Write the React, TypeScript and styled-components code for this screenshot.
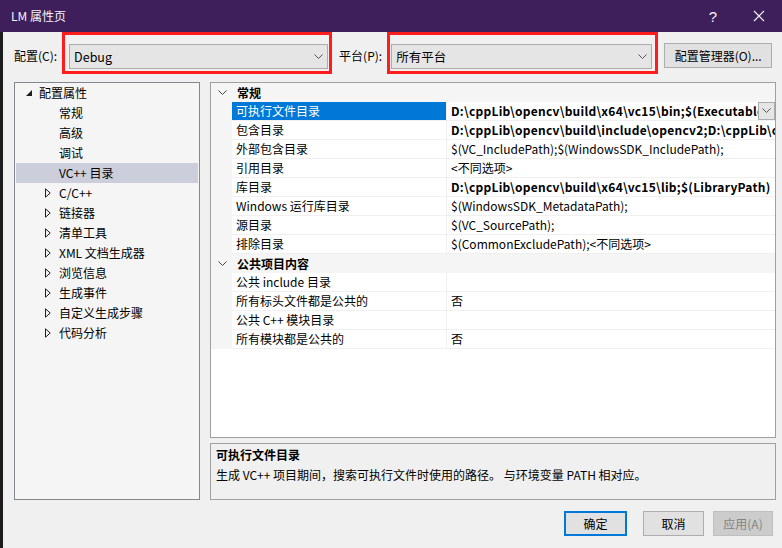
import React from "react";
import styled, { createGlobalStyle, css } from "styled-components";

const Global = createGlobalStyle`
  html, body { margin: 0; padding: 0; background: #f0f0f0; }
  body {
    font-family: "Noto Sans CJK SC", "Noto Sans", "Liberation Sans", sans-serif;
    font-size: 12px;
    color: #000;
  }
  * { box-sizing: border-box; }
`;

const Window = styled.div`
  width: 782px;
  height: 548px;
  display: flex;
  flex-direction: column;
  overflow: hidden;
  background: #f0f0f0;
`;

const TitleBar = styled.div`
  height: 32px;
  flex: none;
  background: #3e1f5b;
  color: #f4f4f4;
  display: flex;
  align-items: center;
  padding-left: 11px;
  font-size: 12px;
`;

const TitleText = styled.div`
  flex: 1;
  line-height: 16px;
`;

const TitleBtn = styled.div<{ $w: number }>`
  width: ${(p) => p.$w}px;
  height: 32px;
  display: flex;
  align-items: center;
  justify-content: center;
  color: #f4f4f4;
  font-size: 15px;
  font-family: "Liberation Sans", sans-serif;
`;

const Body = styled.div`
  flex: 1;
  display: flex;
  flex-direction: column;
  border-left: 3px solid #1c1c1e;
  padding: 0 6px 0 11px;
`;

const TopRow = styled.div`
  height: 50px;
  flex: none;
  display: flex;
  align-items: flex-start;
`;

const Label = styled.div<{ $ml?: number }>`
  margin-top: 16px;
  margin-left: ${(p) => p.$ml ?? 0}px;
  line-height: 16px;
  white-space: nowrap;
`;

const Highlight = styled.div<{ $w: number; $ml: number; $pl: number; $pr: number }>`
  width: ${(p) => p.$w}px;
  flex: none;
  height: 42px;
  margin-left: ${(p) => p.$ml}px;
  border: 3px solid #ff1c1c;
  padding: 9px ${(p) => p.$pr}px 2px ${(p) => p.$pl}px;
  display: flex;
`;

const Combo = styled.div`
  flex: 1;
  height: 25px;
  background: #e5e5e5;
  border: 1px solid #acacac;
  display: flex;
  align-items: center;
  padding-left: 4px;
  padding-right: 4px;
`;

const ComboText = styled.div`
  flex: 1;
  line-height: 16px;
  font-size: 12.5px;
`;

const Button = styled.div<{ $w: number; $variant?: "default" | "primary" | "disabled" }>`
  width: ${(p) => p.$w}px;
  flex: none;
  height: 25px;
  display: flex;
  align-items: center;
  justify-content: center;
  background: #e1e1e1;
  border: 1px solid #adadad;
  line-height: 16px;
  white-space: nowrap;
  ${(p) =>
    p.$variant === "primary" &&
    css`
      border: 2px solid #0078d7;
    `}
  ${(p) =>
    p.$variant === "disabled" &&
    css`
      background: #cccccc;
      border-color: #bfbfbf;
      color: #838383;
    `}
`;

const ManagerButton = styled(Button)`
  margin-left: 6px;
  margin-top: 11px;
`;

const Main = styled.div`
  display: flex;
  gap: 10px;
  height: 418px;
  flex: none;
`;

const Tree = styled.div`
  width: 186px;
  flex: none;
  height: 418px;
  background: #f5f5f5;
  border: 1px solid #828790;
  padding: 0 1px;
`;

const TreeRow = styled.div<{ $selected?: boolean; $level: number }>`
  height: 20px;
  display: flex;
  align-items: center;
  padding-left: ${(p) => (p.$level === 0 ? 9 : 29)}px;
  background: ${(p) => (p.$selected ? "#cccedb" : "transparent")};
  white-space: nowrap;
  line-height: 16px;
`;

const Expander = styled.div`
  width: 14px;
  height: 20px;
  display: flex;
  align-items: center;
  justify-content: flex-start;
  flex: none;
`;

const RightCol = styled.div`
  width: 566px;
  flex: none;
  display: flex;
  flex-direction: column;
  gap: 5px;
`;

const Grid = styled.div`
  height: 357px;
  background: #ffffff;
  border: 1px solid #a0a0a0;
  overflow: hidden;
`;

const CategoryRow = styled.div`
  height: 19px;
  display: flex;
  align-items: center;
  background: #f5f5f5;
  font-weight: bold;
  line-height: 16px;
`;

const CatChevron = styled.div`
  width: 21px;
  display: flex;
  justify-content: center;
  padding-left: 2px;
`;

const CatText = styled.div`
  padding-left: 5px;
`;

const PropRow = styled.div`
  height: 19px;
  display: flex;
`;

const Gutter = styled.div`
  width: 21px;
  flex: none;
  background: #f5f5f5;
`;

const NameCell = styled.div<{ $selected?: boolean }>`
  width: 215px;
  flex: none;
  padding-left: 4px;
  display: flex;
  align-items: center;
  line-height: 16px;
  border-bottom: 1px solid #f0f0f0;
  border-right: 1px solid #f0f0f0;
  white-space: nowrap;
  ${(p) =>
    p.$selected &&
    css`
      background: #0078d7;
      color: #ffffff;
    `}
`;

const ValueCell = styled.div`
  flex: 1;
  min-width: 0;
  display: flex;
  align-items: stretch;
  border-bottom: 1px solid #f0f0f0;
`;

const ValueText = styled.div<{ $bold?: boolean }>`
  flex: 1;
  min-width: 0;
  overflow: hidden;
  white-space: nowrap;
  padding-left: 4px;
  line-height: 18px;
  font-weight: ${(p) => (p.$bold ? "bold" : "normal")};
  letter-spacing: ${(p) => (p.$bold ? "0.26px" : "0")};
`;

const DropBtn = styled.div`
  width: 17px;
  flex: none;
  background: #e5e5e5;
  border: 1px solid #acacac;
  display: flex;
  align-items: center;
  justify-content: center;
`;

const Description = styled.div`
  height: 57px;
  border: 1px solid #a0a0a0;
  background: #f0f0f0;
  padding: 1px 5px;
  line-height: 20px;
`;

const DescTitle = styled.div`
  font-weight: bold;
`;

const Footer = styled.div`
  flex: 1;
  display: flex;
  justify-content: flex-end;
  align-items: flex-start;
  padding-top: 11px;
  padding-right: 3px;
`;

const FooterGap = styled.div<{ $w: number }>`
  width: ${(p) => p.$w}px;
`;

const ChevronDown = ({ size = 9, color = "#555" }: { size?: number; color?: string }) => (
  <svg width={size} height={size * 0.6} viewBox="0 0 10 6">
    <path d="M0.5 0.5 L5 5 L9.5 0.5" fill="none" stroke={color} strokeWidth="1.1" />
  </svg>
);

const ExpandedTri = () => (
  <svg width="8" height="8" viewBox="0 0 8 8">
    <path d="M7 1 L7 7 L1 7 Z" fill="#1e1e1e" />
  </svg>
);

const CollapsedTri = () => (
  <svg width="6" height="10" viewBox="0 0 6 10">
    <path d="M0.5 0.8 L5.2 5 L0.5 9.2 Z" fill="none" stroke="#1e1e1e" strokeWidth="1" />
  </svg>
);

const CloseIcon = () => (
  <svg width="12" height="12" viewBox="0 0 12 12">
    <path d="M1 1 L11 11 M11 1 L1 11" stroke="#f4f4f4" strokeWidth="1.2" />
  </svg>
);

type TreeItem = { label: string; level: number; exp?: "open" | "closed"; selected?: boolean };

const treeItems: TreeItem[] = [
  { label: "配置属性", level: 0, exp: "open" },
  { label: "常规", level: 1 },
  { label: "高级", level: 1 },
  { label: "调试", level: 1 },
  { label: "VC++ 目录", level: 1, selected: true },
  { label: "C/C++", level: 1, exp: "closed" },
  { label: "链接器", level: 1, exp: "closed" },
  { label: "清单工具", level: 1, exp: "closed" },
  { label: "XML 文档生成器", level: 1, exp: "closed" },
  { label: "浏览信息", level: 1, exp: "closed" },
  { label: "生成事件", level: 1, exp: "closed" },
  { label: "自定义生成步骤", level: 1, exp: "closed" },
  { label: "代码分析", level: 1, exp: "closed" },
];

type Prop = { name: string; value: string; bold?: boolean; selected?: boolean };
type Category = { title: string; props: Prop[] };

const categories: Category[] = [
  {
    title: "常规",
    props: [
      { name: "可执行文件目录", value: "D:\\cppLib\\opencv\\build\\x64\\vc15\\bin;$(ExecutablePath)", bold: true, selected: true },
      { name: "包含目录", value: "D:\\cppLib\\opencv\\build\\include\\opencv2;D:\\cppLib\\opencv\\build\\include;$(IncludePath)", bold: true },
      { name: "外部包含目录", value: "$(VC_IncludePath);$(WindowsSDK_IncludePath);" },
      { name: "引用目录", value: "<不同选项>" },
      { name: "库目录", value: "D:\\cppLib\\opencv\\build\\x64\\vc15\\lib;$(LibraryPath)", bold: true },
      { name: "Windows 运行库目录", value: "$(WindowsSDK_MetadataPath);" },
      { name: "源目录", value: "$(VC_SourcePath);" },
      { name: "排除目录", value: "$(CommonExcludePath);<不同选项>" },
    ],
  },
  {
    title: "公共项目内容",
    props: [
      { name: "公共 include 目录", value: "" },
      { name: "所有标头文件都是公共的", value: "否" },
      { name: "公共 C++ 模块目录", value: "" },
      { name: "所有模块都是公共的", value: "否" },
    ],
  },
];

export default function App() {
  return (
    <>
      <Global />
      <Window>
        <TitleBar>
          <TitleText>LM 属性页</TitleText>
          <TitleBtn $w={46}>?</TitleBtn>
          <TitleBtn $w={46}>
            <CloseIcon />
          </TitleBtn>
        </TitleBar>
        <Body>
          <TopRow>
            <Label>配置(C):</Label>
            <Highlight $w={270} $ml={5} $pl={4} $pr={1}>
              <Combo>
                <ComboText>Debug</ComboText>
                <ChevronDown />
              </Combo>
            </Highlight>
            <Label $ml={7}>平台(P):</Label>
            <Highlight $w={271} $ml={5} $pl={1} $pr={3}>
              <Combo>
                <ComboText>所有平台</ComboText>
                <ChevronDown />
              </Combo>
            </Highlight>
            <ManagerButton $w={108}>配置管理器(O)...</ManagerButton>
          </TopRow>
          <Main>
            <Tree>
              {treeItems.map((t) => (
                <TreeRow key={t.label} $level={t.level} $selected={t.selected}>
                  <Expander>
                    {t.exp === "open" && <ExpandedTri />}
                    {t.exp === "closed" && <CollapsedTri />}
                  </Expander>
                  <span>{t.label}</span>
                </TreeRow>
              ))}
            </Tree>
            <RightCol>
              <Grid>
                {categories.map((c) => (
                  <React.Fragment key={c.title}>
                    <CategoryRow>
                      <CatChevron>
                        <ChevronDown size={9} color="#444" />
                      </CatChevron>
                      <CatText>{c.title}</CatText>
                    </CategoryRow>
                    {c.props.map((p) => (
                      <PropRow key={p.name}>
                        <Gutter />
                        <NameCell $selected={p.selected}>{p.name}</NameCell>
                        <ValueCell>
                          <ValueText $bold={p.bold}>{p.value}</ValueText>
                          {p.selected && (
                            <DropBtn>
                              <ChevronDown size={9} color="#555" />
                            </DropBtn>
                          )}
                        </ValueCell>
                      </PropRow>
                    ))}
                  </React.Fragment>
                ))}
              </Grid>
              <Description>
                <DescTitle>可执行文件目录</DescTitle>
                <div>生成 VC++ 项目期间，搜索可执行文件时使用的路径。 与环境变量 PATH 相对应。</div>
              </Description>
            </RightCol>
          </Main>
          <Footer>
            <Button $w={63} $variant="primary">确定</Button>
            <FooterGap $w={16} />
            <Button $w={61}>取消</Button>
            <FooterGap $w={9} />
            <Button $w={60} $variant="disabled">应用(A)</Button>
          </Footer>
        </Body>
      </Window>
    </>
  );
}
